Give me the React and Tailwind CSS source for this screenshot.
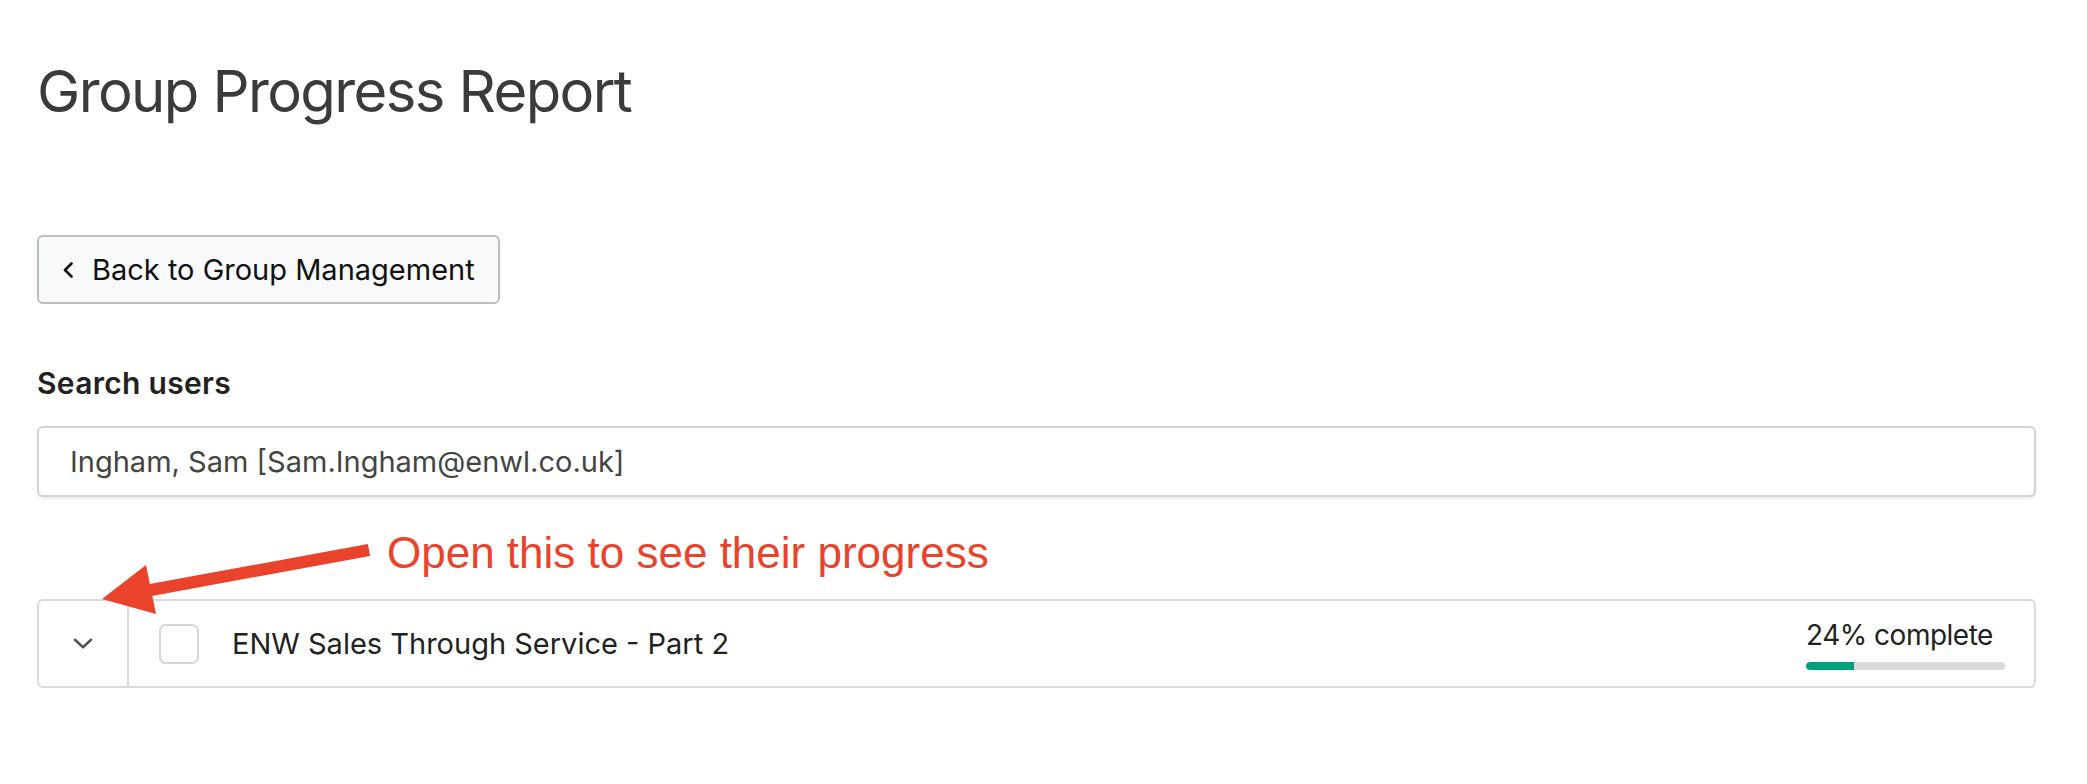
import React from "react";

function Chevron({ className, dir = "down" }) {
  if (dir === "left") {
    return (
      <svg className={className} viewBox="0 0 10 16" fill="none">
        <polyline points="8.5,1.5 2,8 8.5,14.5" stroke="currentColor" strokeWidth="2.6" strokeLinecap="round" strokeLinejoin="round" />
      </svg>
    );
  }
  return (
    <svg className={className} viewBox="0 0 20 11" fill="none">
      <polyline points="2,1.8 10,9.2 18,1.8" stroke="currentColor" strokeWidth="2.6" strokeLinecap="round" strokeLinejoin="round" />
    </svg>
  );
}

export default function App() {
  const pct = 24;
  return (
    <div className="relative min-h-[784px] bg-white pl-[37px] pr-[51px] pt-[55px] font-['Inter','Noto_Sans',sans-serif]">
      <h1 className="text-[58px] leading-[72px] font-normal text-[#3b3b3b] tracking-[-1.6px]">
        Group Progress Report
      </h1>

      <button className="mt-[108px] flex h-[69px] w-[463px] items-center rounded-[6px] border-2 border-[#bdbdbd] bg-[#f8f9fa] pl-[24px] text-[29px] leading-[34px] text-[#111]">
        <Chevron dir="left" className="h-[16px] w-[10px] text-[#111]" />
        <span className="ml-[19px]">Back to Group Management</span>
      </button>

      <div className="mt-[61px] text-[30px] leading-[36px] font-semibold tracking-[0.3px] text-[#222]">Search users</div>

      <div className="mt-[25px] flex h-[71px] items-center rounded-[6px] border-2 border-[#d3d3d3] bg-white pl-[31px] text-[29px] leading-[34px] text-[#444] shadow-[0_2px_3px_rgba(0,0,0,0.08)]">
        Ingham, Sam [Sam.Ingham@enwl.co.uk]
      </div>

      <div className="mt-[102px] flex h-[89px] items-stretch rounded-[6px] border-2 border-[#dadada] bg-white">
        <div className="flex w-[90px] items-center justify-center border-r-2 border-[#dadada]">
          <Chevron className="h-[11px] w-[20px] text-[#555]" />
        </div>
        <div className="flex flex-1 items-center pl-[30px] pr-[29px]">
          <div className="h-[40px] w-[40px] rounded-[7px] border-2 border-[#d6d6d6] bg-white" />
          <div className="ml-[33px] flex-1 text-[29px] leading-[34px] text-[#222]">
            ENW Sales Through Service - Part 2
          </div>
          <div className="flex w-[199px] flex-col">
            <div className="text-[28px] leading-[34px] tracking-[-0.5px] text-[#222]">{pct}% complete</div>
            <div className="mt-[10px] h-[8px] w-full overflow-hidden rounded-full bg-[#d9d9d9]">
              <div className="h-full rounded-l-full bg-[#00a07b]" style={{ width: `${pct}%` }} />
            </div>
          </div>
        </div>
      </div>

      <svg className="pointer-events-none absolute left-0 top-0 h-[784px] w-[2087px]" viewBox="0 0 2087 784">
        <line x1="369" y1="550" x2="140" y2="592" stroke="#e9432b" strokeWidth="12" />
        <polygon points="102,599 146,565 156,614" fill="#e9432b" />
      </svg>
      <div className="pointer-events-none absolute left-[387px] top-[531px] font-['Liberation_Sans',Arial,sans-serif] text-[44px] leading-[44px] text-[#e9432b]">
        Open this to see their progress
      </div>
    </div>
  );
}
